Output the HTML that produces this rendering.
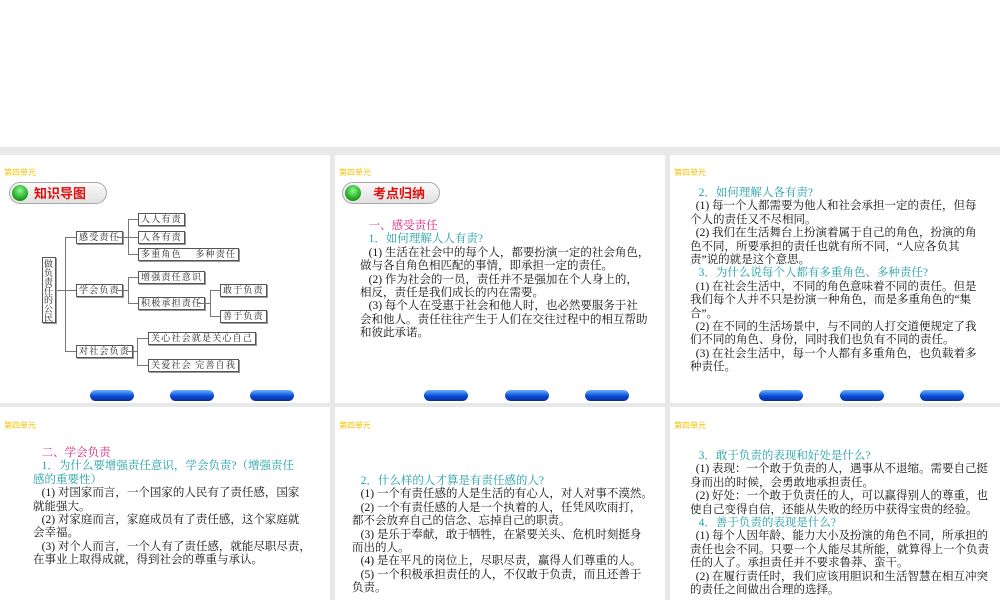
<!DOCTYPE html>
<html><head><meta charset="utf-8">
<style>
*{margin:0;padding:0;box-sizing:border-box}
body{width:1000px;height:600px;background:#fff;position:relative;overflow:hidden;font-family:"Liberation Serif","Noto Serif CJK SC",serif;}
.bg{position:absolute;left:0;top:147px;width:1000px;height:453px;background:#e8e8e8}
.s{position:absolute;background:#fff}
.hd{position:absolute;font-size:8px;color:#f2c200;font-family:"Liberation Sans","Noto Sans CJK SC",sans-serif;}
.pill{position:absolute;height:22px;width:98px;border:1px solid #aaa;border-radius:11px;background:linear-gradient(#fafafa,#e0e0e0);}
.pill i{position:absolute;left:2px;top:2px;width:16px;height:16px;border-radius:50%;background:radial-gradient(circle at 50% 35%,#8f8,#1a9a1a 70%,#0a6a0a);}
.pill b{position:absolute;left:24px;top:0px;font-size:13px;line-height:20px;color:#e01010;font-family:"Noto Sans CJK SC",sans-serif;font-weight:bold}
.bx{position:absolute;border:1px solid #555;font-size:9px;line-height:9px;padding:1px 2px;letter-spacing:1.2px;white-space:nowrap;background:#fff;color:#222;box-shadow:1px 1px 0 #999}
.ln{position:absolute;background:#777}
.btn{position:absolute;width:44px;height:11px;border-radius:6px;background:linear-gradient(#6ab4ff,#0a48d8 55%,#08309a);}
.t{position:absolute;font-size:11.5px;line-height:13.4px;white-space:nowrap;color:#111}
.pk{color:#e0207a}.tl{color:#20a0a8}
</style></head><body>
<div class="bg"></div>
<!-- slide 1 -->
<div class="s" style="left:0;top:155px;width:330px;height:248px"></div>
<div class="hd" style="left:4px;top:167px">第四单元</div>
<div class="pill" style="left:9px;top:182px"><i></i><b>知识导图</b></div>
<div class="ln" style="left:55px;top:290px;width:21px;height:1px"></div>
<div class="ln" style="left:65px;top:237px;width:1px;height:115px"></div>
<div class="ln" style="left:65px;top:237px;width:11px;height:1px"></div>
<div class="ln" style="left:65px;top:351px;width:11px;height:1px"></div>
<div class="bx" style="left:42px;top:257px;width:14px;height:66px;white-space:normal;letter-spacing:0;line-height:9px;padding:2px 1px">做负责任的公民</div>
<div class="bx" style="left:76px;top:231px">感受责任</div>
<div class="bx" style="left:76px;top:284px">学会负责</div>
<div class="bx" style="left:76px;top:345px">对社会负责</div>
<div class="ln" style="left:117px;top:237px;width:11px;height:1px"></div>
<div class="ln" style="left:128px;top:219px;width:1px;height:36px"></div>
<div class="ln" style="left:128px;top:219px;width:10px;height:1px"></div>
<div class="ln" style="left:128px;top:237px;width:10px;height:1px"></div>
<div class="ln" style="left:128px;top:254px;width:10px;height:1px"></div>
<div class="bx" style="left:138px;top:213px">人人有责</div>
<div class="bx" style="left:138px;top:231px">人各有责</div>
<div class="bx" style="left:138px;top:248px">多重角色　 多种责任</div>
<div class="ln" style="left:117px;top:290px;width:11px;height:1px"></div>
<div class="ln" style="left:128px;top:277px;width:1px;height:27px"></div>
<div class="ln" style="left:128px;top:277px;width:10px;height:1px"></div>
<div class="ln" style="left:128px;top:303px;width:10px;height:1px"></div>
<div class="bx" style="left:138px;top:271px">增强责任意识</div>
<div class="bx" style="left:138px;top:297px">积极承担责任</div>
<div class="ln" style="left:198px;top:303px;width:12px;height:1px"></div>
<div class="ln" style="left:210px;top:290px;width:1px;height:27px"></div>
<div class="ln" style="left:210px;top:290px;width:10px;height:1px"></div>
<div class="ln" style="left:210px;top:316px;width:10px;height:1px"></div>
<div class="bx" style="left:220px;top:284px">敢于负责</div>
<div class="bx" style="left:220px;top:310px">善于负责</div>
<div class="ln" style="left:127px;top:351px;width:10px;height:1px"></div>
<div class="ln" style="left:137px;top:338px;width:1px;height:28px"></div>
<div class="ln" style="left:137px;top:338px;width:11px;height:1px"></div>
<div class="ln" style="left:137px;top:365px;width:11px;height:1px"></div>
<div class="bx" style="left:148px;top:332px">关心社会就是关心自己</div>
<div class="bx" style="left:148px;top:359px">关爱社会 完善自我</div>
<div class="btn" style="left:90px;top:390px"></div><div class="btn" style="left:170px;top:390px"></div><div class="btn" style="left:250px;top:390px"></div>
<!-- slide 2 -->
<div class="s" style="left:335px;top:155px;width:330px;height:248px"></div>
<div class="hd" style="left:339px;top:167px">第四单元</div>
<div class="pill" style="left:342px;top:182px"><i></i><b style="left:30px">考点归纳</b></div>
<div class="t" style="left:360px;top:220px"><span class="pk">&nbsp;&nbsp;&nbsp;一、感受责任</span><br><span class="tl">&nbsp;&nbsp;&nbsp;1．如何理解人人有责?</span><br>&nbsp;&nbsp;&nbsp;(1) 生活在社会中的每个人，都要扮演一定的社会角色，<br>做与各自角色相匹配的事情，即承担一定的责任。<br>&nbsp;&nbsp;&nbsp;(2) 作为社会的一员，责任并不是强加在个人身上的，<br>相反，责任是我们成长的内在需要。<br>&nbsp;&nbsp;&nbsp;(3) 每个人在受惠于社会和他人时，也必然要服务于社<br>会和他人。责任往往产生于人们在交往过程中的相互帮助<br>和彼此承诺。</div>
<div class="btn" style="left:424px;top:390px"></div><div class="btn" style="left:505px;top:390px"></div><div class="btn" style="left:585px;top:390px"></div>
<!-- slide 3 -->
<div class="s" style="left:670px;top:155px;width:330px;height:248px"></div>
<div class="hd" style="left:674px;top:167px">第四单元</div>
<div class="t" style="left:690px;top:187px"><span class="tl">&nbsp;&nbsp;&nbsp;2．如何理解人各有责?</span><br>&nbsp;&nbsp;(1) 每一个人都需要为他人和社会承担一定的责任，但每<br>个人的责任又不尽相同。<br>&nbsp;&nbsp;(2) 我们在生活舞台上扮演着属于自己的角色，扮演的角<br>色不同，所要承担的责任也就有所不同，“人应各负其<br>责”说的就是这个意思。<br><span class="tl">&nbsp;&nbsp;&nbsp;3．为什么说每个人都有多重角色、多种责任?</span><br>&nbsp;&nbsp;(1) 在社会生活中，不同的角色意味着不同的责任。但是<br>我们每个人并不只是扮演一种角色，而是多重角色的“集<br>合”。<br>&nbsp;&nbsp;(2) 在不同的生活场景中，与不同的人打交道便规定了我<br>们不同的角色、身份，同时我们也负有不同的责任。<br>&nbsp;&nbsp;(3) 在社会生活中，每一个人都有多重角色，也负载着多<br>种责任。</div>
<div class="btn" style="left:759px;top:390px"></div><div class="btn" style="left:840px;top:390px"></div><div class="btn" style="left:920px;top:390px"></div>
<!-- row 2 -->
<div class="s" style="left:0;top:407px;width:330px;height:193px"></div>
<div class="hd" style="left:4px;top:420px">第四单元</div>
<div class="t" style="left:33px;top:447px"><span class="pk">&nbsp;&nbsp;&nbsp;二、学会负责</span><br><span class="tl">&nbsp;&nbsp;&nbsp;1．为什么要增强责任意识，学会负责?（增强责任<br>感的重要性）</span><br>&nbsp;&nbsp;&nbsp;(1) 对国家而言，一个国家的人民有了责任感，国家<br>就能强大。<br>&nbsp;&nbsp;&nbsp;(2) 对家庭而言，家庭成员有了责任感，这个家庭就<br>会幸福。<br>&nbsp;&nbsp;&nbsp;(3) 对个人而言，一个人有了责任感，就能尽职尽责，<br>在事业上取得成就，得到社会的尊重与承认。</div>
<div class="s" style="left:335px;top:407px;width:330px;height:193px"></div>
<div class="hd" style="left:339px;top:420px">第四单元</div>
<div class="t" style="left:352px;top:475px"><span class="tl">&nbsp;&nbsp;&nbsp;2．什么样的人才算是有责任感的人?</span><br>&nbsp;&nbsp;&nbsp;(1) 一个有责任感的人是生活的有心人，对人对事不漠然。<br>&nbsp;&nbsp;&nbsp;(2) 一个有责任感的人是一个执着的人，任凭风吹雨打，<br>都不会放弃自己的信念、忘掉自己的职责。<br>&nbsp;&nbsp;&nbsp;(3) 是乐于奉献，敢于牺牲，在紧要关头、危机时刻挺身<br>而出的人。<br>&nbsp;&nbsp;&nbsp;(4) 是在平凡的岗位上，尽职尽责，赢得人们尊重的人。<br>&nbsp;&nbsp;&nbsp;(5) 一个积极承担责任的人，不仅敢于负责，而且还善于<br>负责。</div>
<div class="s" style="left:670px;top:407px;width:330px;height:193px"></div>
<div class="hd" style="left:674px;top:420px">第四单元</div>
<div class="t" style="left:690px;top:450px"><span class="tl">&nbsp;&nbsp;&nbsp;3．敢于负责的表现和好处是什么?</span><br>&nbsp;&nbsp;(1) 表现：一个敢于负责的人，遇事从不退缩。需要自己挺<br>身而出的时候，会勇敢地承担责任。<br>&nbsp;&nbsp;(2) 好处：一个敢于负责任的人，可以赢得别人的尊重，也<br>使自己变得自信，还能从失败的经历中获得宝贵的经验。<br><span class="tl">&nbsp;&nbsp;&nbsp;4．善于负责的表现是什么?</span><br>&nbsp;&nbsp;(1) 每个人因年龄、能力大小及扮演的角色不同，所承担的<br>责任也会不同。只要一个人能尽其所能，就算得上一个负责<br>任的人了。承担责任并不要求鲁莽、蛮干。<br>&nbsp;&nbsp;(2) 在履行责任时，我们应该用胆识和生活智慧在相互冲突<br>的责任之间做出合理的选择。</div>
</body></html>
